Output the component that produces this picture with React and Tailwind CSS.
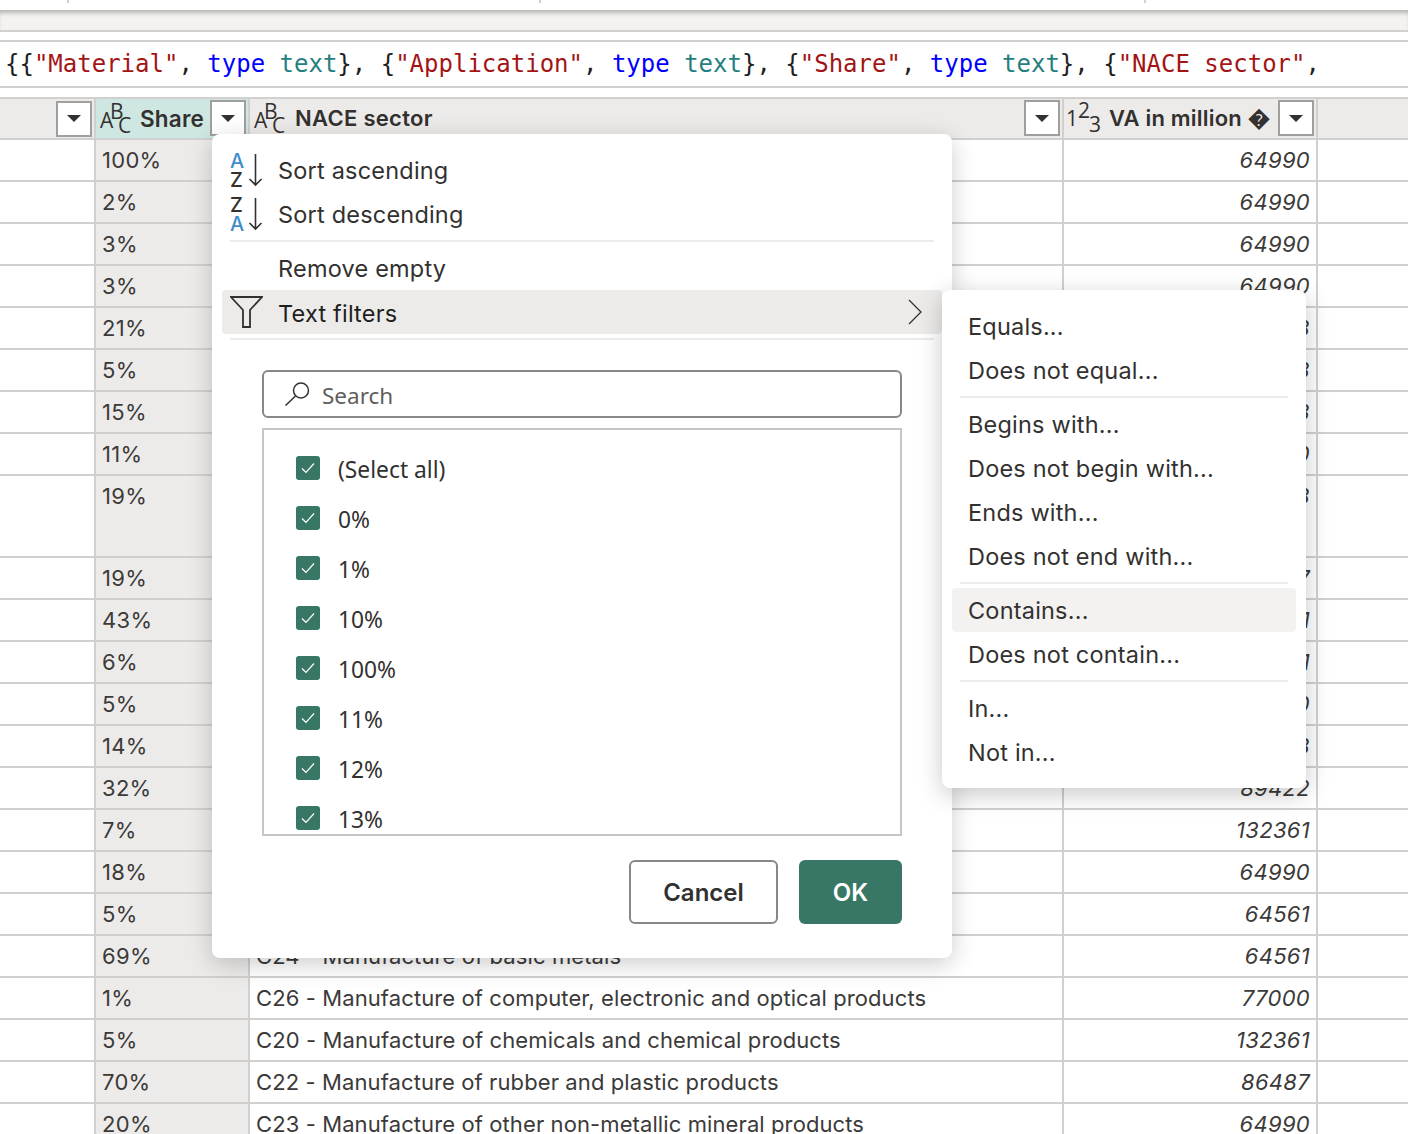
import React from 'react';

const uiFont = "font-['Inter','Liberation_Sans',sans-serif]";

const rows = [
    { share: '100%', nace: '', va: '64990' },
    { share: '2%', nace: '', va: '64990' },
    { share: '3%', nace: '', va: '64990' },
    { share: '3%', nace: '', va: '64990' },
    { share: '21%', nace: '', va: '86488' },
    { share: '5%', nace: '', va: '86488' },
    { share: '15%', nace: '', va: '86488' },
    { share: '11%', nace: '', va: '86480' },
    { share: '19%', nace: '', va: '86488', tall: true },
    { share: '19%', nace: '', va: '64997' },
    { share: '43%', nace: '', va: '77001' },
    { share: '6%', nace: '', va: '77001' },
    { share: '5%', nace: '', va: '86480' },
    { share: '14%', nace: '', va: '86488' },
    { share: '32%', nace: '', va: '89422' },
    { share: '7%', nace: '', va: '132361' },
    { share: '18%', nace: '', va: '64990' },
    { share: '5%', nace: '', va: '64561' },
    { share: '69%', nace: 'C24 - Manufacture of basic metals', va: '64561' },
    { share: '1%', nace: 'C26 - Manufacture of computer, electronic and optical products', va: '77000' },
    { share: '5%', nace: 'C20 - Manufacture of chemicals and chemical products', va: '132361' },
    { share: '70%', nace: 'C22 - Manufacture of rubber and plastic products', va: '86487' },
    { share: '20%', nace: 'C23 - Manufacture of other non-metallic mineral products', va: '64990' },
];

const checks = ['(Select all)', '0%', '1%', '10%', '100%', '11%', '12%', '13%'];

const Caret = () => (
    <svg width="14" height="7" viewBox="0 0 14 7"><path d="M0 0h14L7 7z" fill="#323130" /></svg>
);

const DropButton = ({ className = '' }) => (
    <div className={`w-9 h-9 shrink-0 bg-white border-2 border-[#a19f9d] flex items-center justify-center ${className}`}>
        <Caret />
    </div>
);

const AbcIcon = () => (
    <span className="relative block w-[32px] h-[30px] shrink-0 text-[#323130] text-[21px] font-['Open_Sans',sans-serif] leading-none">
        <span className="absolute left-0 top-[6px]">A</span>
        <span className="absolute left-[10px] top-[-3px]">B</span>
        <span className="absolute left-[18px] top-[11px]">C</span>
    </span>
);

const NumIcon = () => (
    <span className="relative block w-[36px] h-[30px] shrink-0 text-[#323130] text-[21px] font-['Open_Sans',sans-serif] leading-none">
        <span className="absolute left-0 top-[4px]">1</span>
        <span className="absolute left-[12px] top-[-4px]">2</span>
        <span className="absolute left-[23px] top-[10px]">3</span>
    </span>
);

const SortIcon = ({ top, bottom, topColor, bottomColor }) => (
    <span className="relative block w-[34px] h-[36px] shrink-0 text-[20px] font-medium leading-none font-['Inter',sans-serif]">
        <span className={`absolute left-0 top-[-2px] ${topColor}`}>{top}</span>
        <span className={`absolute left-0 top-[17px] ${bottomColor}`}>{bottom}</span>
        <svg className="absolute left-[18px] top-0" width="15" height="36" viewBox="0 0 15 36" fill="none" stroke="#323130" strokeWidth="1.6">
            <path d="M7.5 1v31M1.5 26l6 6 6-6" />
        </svg>
    </span>
);

const MenuRule = ({ className = '' }) => <div className={`h-[2px] bg-[#edebe9] ${className}`} />;

const SubItem = ({ label, active }) => (
    <div className={`h-11 flex items-center pl-[16px] pt-[2px] text-[23.5px] mx-[10px] rounded-[4px] text-[#323130] tracking-[0.2px] ${active ? 'bg-[#f3f2f1]' : ''}`}>
        {label}
    </div>
);

const App = () => {
    return (
        <div className={`relative w-[1408px] h-[1134px] overflow-hidden bg-white text-[#323130] ${uiFont}`}>
            {/* ribbon remains */}
            <div className="h-[10px] bg-white flex items-start">
                <div className="w-[2px] h-[3px] bg-[#d2d0ce] ml-[67px]" />
                <div className="w-[2px] h-[3px] bg-[#d2d0ce] ml-[470px]" />
                <div className="w-[2px] h-[3px] bg-[#d2d0ce] ml-[603px]" />
            </div>
            <div className="h-[22px] bg-[#f3f2f1] border-b-2 border-[#d2d0ce] shadow-[inset_0_5px_4px_-2px_rgba(0,0,0,0.25)]" />
            <div className="h-[8px]" />
            <div className="h-[48px] border-t-2 border-b-2 border-[#d2d0ce] flex items-center pl-[5px] whitespace-nowrap font-['DejaVu_Sans_Mono','Liberation_Mono',monospace] text-[24px] text-[#1f1f1f] overflow-hidden">
                <span>{'{{'}</span><span className="text-[#a31515]">"Material"</span><span>,&nbsp;</span>
                <span className="text-[#0000ff]">type</span><span>&nbsp;</span><span className="text-[#267f7f]">text</span><span>{'}, {'}</span>
                <span className="text-[#a31515]">"Application"</span><span>,&nbsp;</span>
                <span className="text-[#0000ff]">type</span><span>&nbsp;</span><span className="text-[#267f7f]">text</span><span>{'}, {'}</span>
                <span className="text-[#a31515]">"Share"</span><span>,&nbsp;</span>
                <span className="text-[#0000ff]">type</span><span>&nbsp;</span><span className="text-[#267f7f]">text</span><span>{'}, {'}</span>
                <span className="text-[#a31515]">"NACE sector"</span><span>,</span>
            </div>
            <div className="h-[9px]" />

            {/* grid */}
            <div className="w-[1408px]">
                <div className="flex h-[43px] bg-[#edebe9] border-t-2 border-b-2 border-[#d2d0ce]">
                    <div className="w-[94px] shrink-0 flex items-center justify-end pr-[2px]"><DropButton /></div>
                    <div className="w-[154px] shrink-0 border-l-2 border-[#d2d0ce] bg-[#cfe7e2] flex items-center pl-[4px] relative">
                        <AbcIcon />
                        <span className="ml-[8px] text-[22.5px] font-semibold tracking-[0.2px]">Share</span>
                        <DropButton className="absolute right-[2px] top-[1px]" />
                    </div>
                    <div className="w-[814px] shrink-0 border-l-2 border-[#d2d0ce] flex items-center pl-[4px] relative">
                        <AbcIcon />
                        <span className="ml-[9px] text-[22px] font-semibold tracking-[0.3px]">NACE sector</span>
                        <DropButton className="absolute right-[2px] top-[1px]" />
                    </div>
                    <div className="w-[256px] shrink-0 border-l-2 border-r-2 border-[#d2d0ce] flex items-center pl-[2px] relative">
                        <NumIcon />
                        <span className="ml-[7px] text-[22px] font-semibold tracking-[0.2px] whitespace-nowrap">VA in million �</span>
                        <DropButton className="absolute right-[2px] top-[1px]" />
                    </div>
                </div>
                {rows.map((r, i) => (
                    <div key={i} className={`flex border-b-2 border-[#d2d0ce] text-[22px] text-[#3b3a39] ${r.tall ? 'h-[82px]' : 'h-[42px]'}`}>
                        <div className="w-[94px] shrink-0" />
                        <div className="w-[154px] shrink-0 border-l-2 border-[#d2d0ce] bg-[#edebe9] pl-[6px] pt-[4px] tracking-[0.3px]">{r.share}</div>
                        <div className="w-[814px] shrink-0 border-l-2 border-[#d2d0ce] pl-[6px] pt-[4px] whitespace-nowrap tracking-[0.1px]">{r.nace}</div>
                        <div className="w-[256px] shrink-0 border-l-2 border-r-2 border-[#d2d0ce] pr-[6px] pt-[4px] text-right italic tracking-[0.3px]">{r.va}</div>
                    </div>
                ))}
            </div>

            {/* column filter menu */}
            <div className="absolute left-[212px] top-[134px] w-[740px] h-[824px] bg-white rounded-[8px] shadow-[0_6px_24px_rgba(0,0,0,0.2)] px-[10px] pt-[15px]">
                <div className="flex items-center h-11 pl-[8px] text-[23.5px] tracking-[0.2px]">
                    <SortIcon top="A" bottom="Z" topColor="text-[#3f8ccb]" bottomColor="text-[#323130]" />
                    <span className="ml-[14px]">Sort ascending</span>
                </div>
                <div className="flex items-center h-11 pl-[8px] text-[23.5px] tracking-[0.2px]">
                    <SortIcon top="Z" bottom="A" topColor="text-[#323130]" bottomColor="text-[#3f8ccb]" />
                    <span className="ml-[14px]">Sort descending</span>
                </div>
                <MenuRule className="mx-[8px] mt-[3px] mb-[5px]" />
                <div className="flex items-center h-[43px] pt-[1px] pl-[56px] text-[23.5px] tracking-[0.2px]">Remove empty</div>
                <div className="flex items-center h-11 pt-[4px] pl-[8px] pr-[20px] bg-[#edebe9] rounded-[4px] text-[23.5px] tracking-[0.2px] text-[#201f1e]">
                    <svg width="33" height="33" viewBox="0 0 33 33" fill="none" stroke="#323130" strokeWidth="1.8" className="shrink-0 mb-[4px]">
                        <path d="M1 1H32L20 14V31H13V14Z" />
                    </svg>
                    <span className="ml-[15px]">Text filters</span>
                    <svg width="14" height="26" viewBox="0 0 14 26" fill="none" stroke="#323130" strokeWidth="1.3" className="ml-auto mb-[5px]">
                        <path d="M1 1 13 13 1 25" />
                    </svg>
                </div>
                <MenuRule className="mx-[8px] mt-[4px]" />

                <div className="ml-[40px] mr-[40px] mt-[30px] h-[48px] border-2 border-[#8a8886] rounded-[6px] flex items-center pl-[20px] pt-[4px] text-[22.5px] text-[#605e5c] font-['Noto_Sans',sans-serif]">
                    <svg width="26" height="26" viewBox="0 0 26 26" fill="none" stroke="#323130" strokeWidth="1.5" className="shrink-0 mb-[6px]">
                        <circle cx="17" cy="10.5" r="7.5" /><path d="M11.5 16 1.5 25.5" />
                    </svg>
                    <span className="ml-[12px]">Search</span>
                </div>
                <div className="ml-[40px] mr-[40px] mt-[10px] h-[408px] border-2 border-[#c8c6c4] overflow-hidden pl-[32px] pt-[13px] font-['Noto_Sans',sans-serif] text-[22.8px]">
                    {checks.map(c => (
                        <div key={c} className="flex items-center h-[50px]">
                            <span className="w-6 h-6 rounded-[3px] bg-[#387765] flex items-center justify-center shrink-0">
                                <svg width="14" height="12" viewBox="0 0 14 12" fill="none" stroke="#fff" strokeWidth="1.2"><path d="M1 6.5 5 10.5 13 1.5" /></svg>
                            </span>
                            <span className="ml-[18px] pt-[4px]">{c}</span>
                        </div>
                    ))}
                </div>
                <div className="flex justify-end gap-[21px] mr-[40px] mt-[24px]">
                    <button className="w-[149px] h-[64px] pt-[2px] bg-white border-2 border-[#8a8886] rounded-[6px] text-[24px] font-semibold">Cancel</button>
                    <button className="w-[103px] h-[64px] pt-[2px] bg-[#387765] rounded-[6px] text-[24px] font-semibold text-white">OK</button>
                </div>
            </div>

            {/* text filter submenu */}
            <div className="absolute left-[942px] top-[290px] w-[364px] h-[498px] bg-white rounded-[8px] shadow-[0_6px_24px_rgba(0,0,0,0.22)] pt-[14px]">
                <SubItem label="Equals..." />
                <SubItem label="Does not equal..." />
                <MenuRule className="mx-[18px] mt-[4px] mb-[4px]" />
                <SubItem label="Begins with..." />
                <SubItem label="Does not begin with..." />
                <SubItem label="Ends with..." />
                <SubItem label="Does not end with..." />
                <MenuRule className="mx-[18px] mt-[4px] mb-[4px]" />
                <SubItem label="Contains..." active />
                <SubItem label="Does not contain..." />
                <MenuRule className="mx-[18px] mt-[4px] mb-[4px]" />
                <SubItem label="In..." />
                <SubItem label="Not in..." />
            </div>
        </div>
    );
};

export default App;
